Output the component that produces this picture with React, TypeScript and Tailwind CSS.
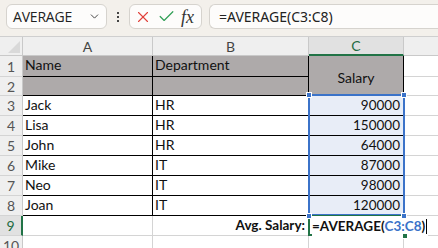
import { ChevronDown, X, Check } from "lucide-react";

const font = { fontFamily: "Lato, 'Liberation Sans', sans-serif" };

type Row = { n: number; name: string; dept: string; salary: string };

const rows: Row[] = [
  { n: 3, name: "Jack", dept: "HR", salary: "90000" },
  { n: 4, name: "Lisa", dept: "HR", salary: "150000" },
  { n: 5, name: "John", dept: "HR", salary: "64000" },
  { n: 6, name: "Mike", dept: "IT", salary: "87000" },
  { n: 7, name: "Neo", dept: "IT", salary: "98000" },
  { n: 8, name: "Joan", dept: "IT", salary: "120000" },
];

const RowHead = ({ n, active }: { n: number; active?: boolean }) => (
  <div
    className={
      active
        ? "w-[23px] shrink-0 flex items-center justify-center bg-[#e1e1e1] border-r-2 border-r-[#217346] border-b border-b-[#d4d4d4] text-[#1e6b41] text-[14px]"
        : "w-[23px] shrink-0 flex items-center justify-center bg-[#efefef] border-r border-r-[#c9c9c9] border-b border-b-[#d4d4d4] text-[#555] text-[14px]"
    }
  >
    {n}
  </div>
);

const Handle = ({ className }: { className: string }) => (
  <div className={"absolute w-[6px] h-[6px] bg-[#3b73c9] border border-white " + className} />
);

export default function App() {
  return (
    <div className="w-[438px] h-[248px] overflow-hidden bg-white text-[#111]" style={font}>
      {/* toolbar */}
      <div className="h-[37px] bg-[#f3f0eb] border-b border-[#cfcfcf] flex items-start pt-[4px] pl-[6px] gap-[7px]">
        <div className="w-[101px] h-[25px] bg-[#fdfcfb] border border-[#d6d3ce] rounded-[6px] flex items-center justify-between pl-[6px] pr-[5px]">
          <span className="text-[14px] text-[#222] tracking-[-0.2px]" style={{ fontFamily: "'Open Sans', sans-serif" }}>
            AVERAGE
          </span>
          <ChevronDown className="w-[13px] h-[13px] text-[#444]" strokeWidth={1.8} />
        </div>
        <div className="w-[8px] h-[25px] flex flex-col items-center justify-center gap-[2px]">
          <div className="w-[2px] h-[2px] bg-[#444]" />
          <div className="w-[2px] h-[2px] bg-[#444]" />
          <div className="w-[2px] h-[2px] bg-[#444]" />
        </div>
        <div className="w-[73px] h-[25px] bg-[#fdfcfb] border border-[#d6d3ce] rounded-[6px] flex items-center pl-[4px] gap-[5px]">
          <X className="w-[18px] h-[18px] text-[#e0403a]" strokeWidth={1.5} />
          <Check className="w-[19px] h-[19px] text-[#2f9e55]" strokeWidth={1.5} />
          <span className="text-[18px] italic text-[#333] leading-none" style={{ fontFamily: "'Liberation Serif', serif" }}>
            fx
          </span>
        </div>
        <div className="flex-1 h-[25px] bg-[#fdfcfb] border border-[#d6d3ce] border-r-0 rounded-l-[6px] flex items-center pl-[9px]">
          <span className="text-[14px] text-[#222]" style={{ fontFamily: "'Noto Sans', sans-serif" }}>
            =AVERAGE(C3:C8)
          </span>
        </div>
      </div>

      {/* column headers */}
      <div className="flex h-[19px] text-[14px] text-[#444]">
        <div className="w-[23px] shrink-0 bg-[#efefef] border-r border-b border-[#c9c9c9] relative overflow-hidden">
          <div className="absolute right-[2px] bottom-[2px] w-0 h-0 border-l-[12px] border-l-transparent border-b-[12px] border-b-[#d9d9d9]" />
        </div>
        <div className="w-[130px] shrink-0 bg-[#efefef] border-r border-b border-[#c9c9c9] flex items-center justify-center">A</div>
        <div className="w-[156px] shrink-0 bg-[#efefef] border-r border-b border-[#c9c9c9] flex items-center justify-center">B</div>
        <div className="w-[95px] shrink-0 bg-[#e1e1e1] border-r border-r-[#c9c9c9] border-b-2 border-b-[#217346] flex items-center justify-center text-[#1e6b41]">C</div>
        <div className="flex-1 bg-[#efefef] border-b border-[#c9c9c9]" />
      </div>

      {/* rows 1-2 with merged C */}
      <div className="flex h-[40px] text-[14px]">
        <div className="w-[23px] shrink-0 flex flex-col">
          <div className="h-[21px] flex items-center justify-center bg-[#efefef] border-r border-r-[#c9c9c9] border-b border-b-[#d4d4d4] text-[#555]">1</div>
          <div className="h-[19px] flex items-center justify-center bg-[#efefef] border-r border-r-[#c9c9c9] border-b border-b-[#d4d4d4] text-[#555]">2</div>
        </div>
        <div className="w-[286px] shrink-0 flex flex-col bg-[#aeaaaa]">
          <div className="h-[21px] flex border-b border-black">
            <div className="w-[130px] border-r border-black pl-[2px] flex items-end pb-[1px]">Name</div>
            <div className="flex-1 border-r border-black pl-[2px] flex items-end pb-[1px]">Department</div>
          </div>
          <div className="h-[19px] flex border-b border-black">
            <div className="w-[130px] border-r border-black" />
            <div className="flex-1 border-r border-black" />
          </div>
        </div>
        <div className="w-[95px] shrink-0 bg-[#aeaaaa] border-r border-black flex items-center justify-center pt-[2px]">Salary</div>
        <div className="flex-1 flex flex-col">
          <div className="h-[21px] border-b border-[#d4d4d4]" />
          <div className="h-[19px] border-b border-[#d4d4d4]" />
        </div>
      </div>

      {/* data rows */}
      <div className="relative">
        {rows.map((r) => (
          <div key={r.n} className="flex h-[20px] text-[14px]">
            <RowHead n={r.n} />
            <div className="w-[130px] shrink-0 border-r border-b border-black pl-[2px] flex items-end">{r.name}</div>
            <div className="w-[156px] shrink-0 border-r border-b border-black pl-[2px] flex items-end">{r.dept}</div>
            <div className="w-[95px] shrink-0 bg-[#e8edf7] border-r border-b border-black pr-[3px] flex items-end justify-end text-[13.5px]">{r.salary}</div>
            <div className="flex-1 border-b border-[#d4d4d4]" />
          </div>
        ))}

        {/* selection C3:C8 */}
        <div className="absolute left-[308px] top-[-2px] w-[97px] h-[122px] border-2 border-[#3b73c9] pointer-events-none" />
        <Handle className="left-[306px] top-[-4px]" />
        <Handle className="left-[401px] top-[-4px]" />

        {/* row 9 */}
        <div className="flex h-[20px] text-[14px]">
          <RowHead n={9} active />
          <div className="w-[130px] shrink-0 border-r border-b border-[#d4d4d4]" />
          <div className="w-[156px] shrink-0 border-r border-b border-[#d4d4d4] flex items-center justify-end pr-[3px] font-bold text-[13.5px]">
            Avg. Salary:
          </div>
          <div className="w-[95px] shrink-0 relative">
            <div className="absolute left-[-1px] top-[-1px] w-[97px] h-[21px] border-2 border-[#217346]" />
            <div className="absolute left-[3px] top-0 h-[20px] flex items-center whitespace-nowrap font-bold bg-white pr-[1px] text-[13.5px]">
              <span>=AVERAGE(</span>
              <span className="text-[#3b73c9]">C3:C8</span>
              <span>)</span>
              <span className="ml-[1px] w-px h-[15px] bg-black" />
            </div>
            <div className="absolute right-[-4px] bottom-[-3px] w-[6px] h-[6px] bg-[#217346] border border-white" />
          </div>
          <div className="flex-1 border-b border-[#d4d4d4]" />
        </div>
        <Handle className="left-[306px] top-[117px]" />
        <Handle className="left-[401px] top-[117px]" />

        {/* row 10 */}
        <div className="flex h-[20px] text-[14px]">
          <RowHead n={10} />
          <div className="w-[130px] shrink-0 border-r border-b border-[#d4d4d4]" />
          <div className="w-[156px] shrink-0 border-r border-b border-[#d4d4d4]" />
          <div className="w-[95px] shrink-0 border-r border-b border-[#d4d4d4]" />
          <div className="flex-1 border-b border-[#d4d4d4]" />
        </div>
      </div>
    </div>
  );
}
